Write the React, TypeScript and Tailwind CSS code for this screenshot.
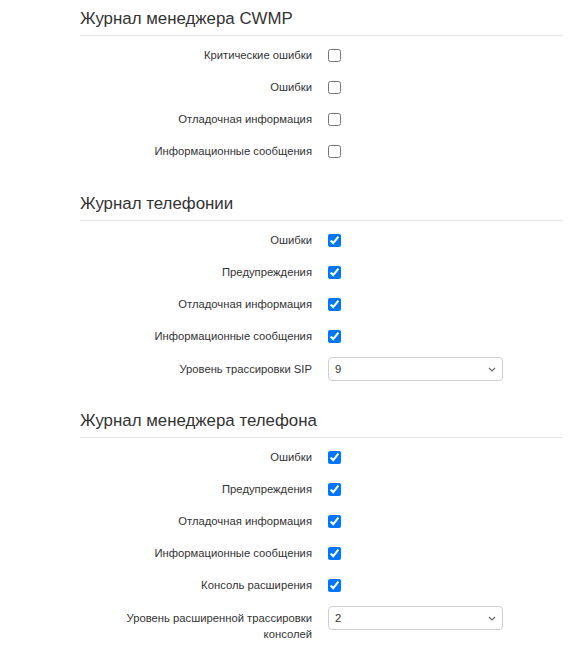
import React from 'react'

type Row =
  | { kind: 'check'; label: string; checked: boolean }
  | { kind: 'select'; label: string; value: string }

type Section = { title: string; rows: Row[] }

const SECTIONS: Section[] = [
  {
    title: 'Журнал менеджера CWMP',
    rows: [
      { kind: 'check', label: 'Критические ошибки', checked: false },
      { kind: 'check', label: 'Ошибки', checked: false },
      { kind: 'check', label: 'Отладочная информация', checked: false },
      { kind: 'check', label: 'Информационные сообщения', checked: false },
    ],
  },
  {
    title: 'Журнал телефонии',
    rows: [
      { kind: 'check', label: 'Ошибки', checked: true },
      { kind: 'check', label: 'Предупреждения', checked: true },
      { kind: 'check', label: 'Отладочная информация', checked: true },
      { kind: 'check', label: 'Информационные сообщения', checked: true },
      { kind: 'select', label: 'Уровень трассировки SIP', value: '9' },
    ],
  },
  {
    title: 'Журнал менеджера телефона',
    rows: [
      { kind: 'check', label: 'Ошибки', checked: true },
      { kind: 'check', label: 'Предупреждения', checked: true },
      { kind: 'check', label: 'Отладочная информация', checked: true },
      { kind: 'check', label: 'Информационные сообщения', checked: true },
      { kind: 'check', label: 'Консоль расширения', checked: true },
      { kind: 'select', label: 'Уровень расширенной трассировки консолей', value: '2' },
    ],
  },
]

function Select({ value }: { value: string }) {
  return (
    <div className="flex h-[24px] w-[175px] items-center justify-between rounded-[4px] border border-[#cfcfcf] bg-white pl-[6px] pr-[6px] text-[11.25px] text-[#333]">
      <span>{value}</span>
      <svg width="8" height="5" viewBox="0 0 8 5" fill="none">
        <path d="M1 1l3 3 3-3" stroke="#666" strokeWidth="1.1" />
      </svg>
    </div>
  )
}

function FormRow({ row }: { row: Row }) {
  if (row.kind === 'check') {
    return (
      <div className="flex h-8 items-center">
        <label className="w-[232px] text-right">{row.label}</label>
        <input
          type="checkbox"
          defaultChecked={row.checked}
          className="ml-4 h-[13px] w-[13px]"
        />
      </div>
    )
  }
  return (
    <div className="flex min-h-8 items-start pt-[5px]">
      <label className="w-[232px] pt-[4px] text-right leading-[16px]">
        {row.label}
      </label>
      <div className="ml-4">
        <Select value={row.value} />
      </div>
    </div>
  )
}

export default function App() {
  return (
    <div
      className="min-h-[645px] bg-white pl-[80px] pr-[11px] pt-[8px] text-[11.25px] text-[#333]"
      style={{ fontFamily: '"Liberation Sans", Arial, sans-serif' }}
    >
      {SECTIONS.map((section, i) => (
        <section key={section.title} className={i === 0 ? '' : 'mt-[26px]'}>
          <h2 className="border-b border-[#e5e5e5] pb-[5px] text-[16.875px] leading-[22px] font-normal text-[#333]">
            {section.title}
          </h2>
          <div className="mt-[3px]">
            {section.rows.map((row) => (
              <FormRow key={row.label} row={row} />
            ))}
          </div>
        </section>
      ))}
    </div>
  )
}
